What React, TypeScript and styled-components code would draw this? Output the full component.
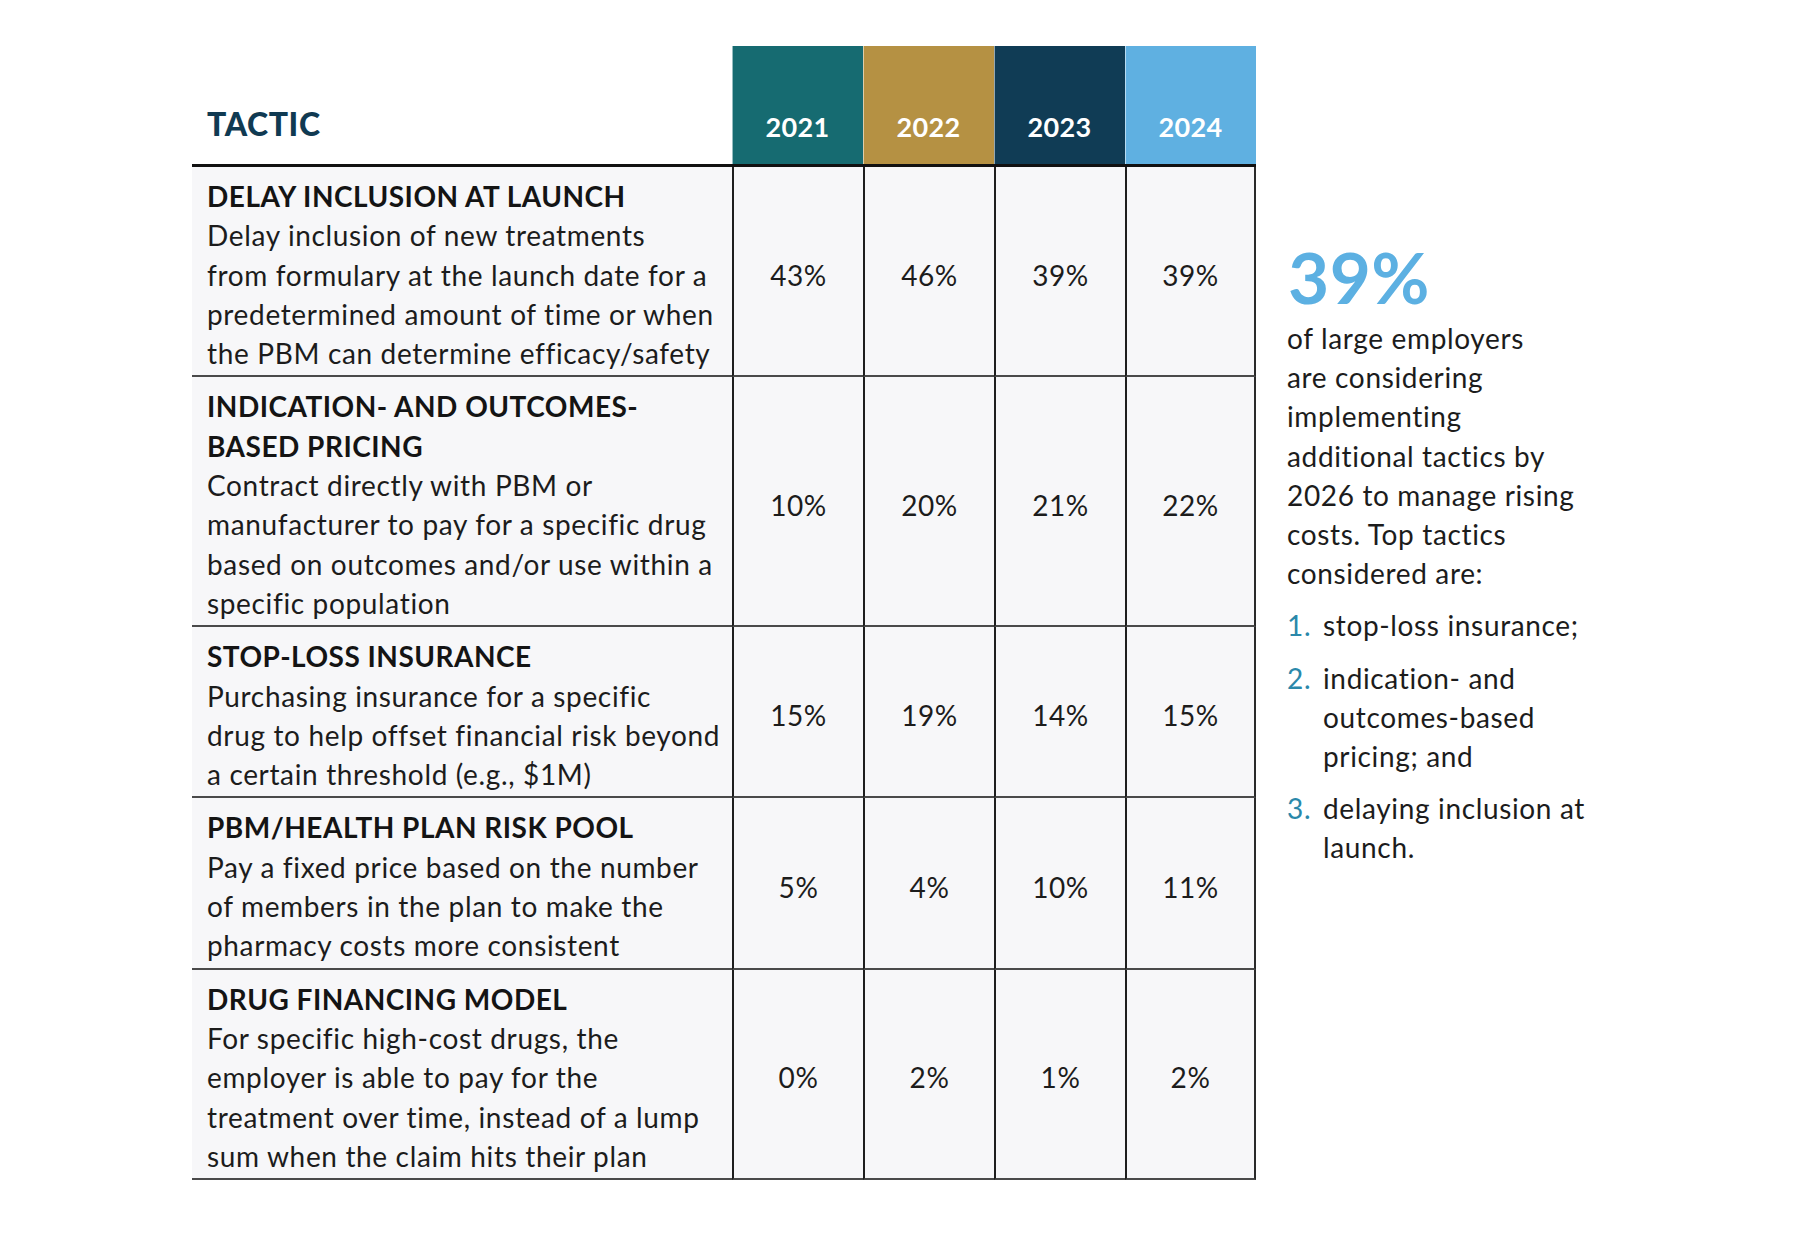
import React from "react";
import styled, { createGlobalStyle } from "styled-components";

const GlobalStyle = createGlobalStyle`
  html, body {
    margin: 0;
    padding: 0;
    background: #ffffff;
  }
  body {
    font-family: Lato, "Open Sans", "Noto Sans", sans-serif;
    color: #1c1c1c;
  }
`;

const Page = styled.div`
  display: flex;
  align-items: flex-start;
  padding: 46px 0 0 192px;
  width: 1800px;
  height: 1242px;
  box-sizing: border-box;
`;

const Table = styled.div`
  display: grid;
  grid-template-columns: 540px repeat(4, 131px);
  flex: none;
`;

const TacticHead = styled.div`
  display: flex;
  align-items: flex-end;
  height: 121px;
  box-sizing: border-box;
  padding: 0 0 25px 15px;
  border-bottom: 3px solid #111111;
  font-size: 32px;
  line-height: 30px;
  font-weight: 900;
  color: #103a52;
  letter-spacing: 0.6px;
`;

const YearHead = styled.div<{ $bg: string }>`
  display: flex;
  align-items: flex-end;
  justify-content: center;
  height: 121px;
  box-sizing: border-box;
  padding-bottom: 23px;
  background: ${(p) => p.$bg};
  border-bottom: 3px solid #111111;
  box-shadow: inset 1px 0 0 rgba(255, 255, 255, 0.55);
  color: #ffffff;
  font-size: 27px;
  line-height: 28px;
  font-weight: 700;
  letter-spacing: 0.3px;
`;

const TacticCell = styled.div`
  background: #f7f7f9;
  padding: 10px 6px 2px 15px;
  border-bottom: 2px solid #4a4a4a;
  font-size: 28px;
  line-height: 39.3px;
  letter-spacing: 0.65px;
  color: #1c1c1c;
`;

const Title = styled.div`
  font-weight: 700;
  color: #141414;
  white-space: nowrap;
  letter-spacing: 0.5px;
`;

const Line = styled.div`
  white-space: nowrap;
`;

const ValueCell = styled.div<{ $last?: boolean }>`
  display: flex;
  align-items: center;
  justify-content: center;
  background: #f7f7f9;
  padding: 10px 0 2px;
  border-left: 2px solid #1e1e1e;
  border-right: ${(p) => (p.$last ? "2px solid #2a2a2a" : "none")};
  border-bottom: 2px solid #4a4a4a;
  font-size: 28px;
  line-height: 39px;
  letter-spacing: 0.6px;
  color: #1c1c1c;
`;

const Aside = styled.div`
  margin-left: 31px;
  padding-top: 197px;
  width: 380px;
  font-size: 28px;
  line-height: 39.2px;
  letter-spacing: 0.65px;
  color: #1c1c1c;
`;

const BigStat = styled.div`
  font-size: 71px;
  line-height: 68px;
  font-weight: 700;
  letter-spacing: 0.5px;
  color: #5cb0e2;
  margin-left: 1px;
  margin-bottom: 8px;
`;

const List = styled.ol`
  list-style: none;
  margin: 13px 0 0;
  padding: 0;
  display: flex;
  flex-direction: column;
  gap: 13px;
`;

const Item = styled.li`
  display: flex;
`;

const Num = styled.span`
  width: 36px;
  flex: none;
  color: #2a88aa;
`;

type Row = { title: string[]; desc: string[]; values: string[] };

const years = [
  { label: "2021", bg: "#166b71" },
  { label: "2022", bg: "#b59143" },
  { label: "2023", bg: "#103c55" },
  { label: "2024", bg: "#5fb0e1" },
];

const rows: Row[] = [
  {
    title: ["DELAY INCLUSION AT LAUNCH"],
    desc: [
      "Delay inclusion of new treatments",
      "from formulary at the launch date for a",
      "predetermined amount of time or when",
      "the PBM can determine efficacy/safety",
    ],
    values: ["43%", "46%", "39%", "39%"],
  },
  {
    title: ["INDICATION- AND OUTCOMES-", "BASED PRICING"],
    desc: [
      "Contract directly with PBM or",
      "manufacturer to pay for a specific drug",
      "based on outcomes and/or use within a",
      "specific population",
    ],
    values: ["10%", "20%", "21%", "22%"],
  },
  {
    title: ["STOP-LOSS INSURANCE"],
    desc: [
      "Purchasing insurance for a specific",
      "drug to help offset financial risk beyond",
      "a certain threshold (e.g., $1M)",
    ],
    values: ["15%", "19%", "14%", "15%"],
  },
  {
    title: ["PBM/HEALTH PLAN RISK POOL"],
    desc: [
      "Pay a fixed price based on the number",
      "of members in the plan to make the",
      "pharmacy costs more consistent",
    ],
    values: ["5%", "4%", "10%", "11%"],
  },
  {
    title: ["DRUG FINANCING MODEL"],
    desc: [
      "For specific high-cost drugs, the",
      "employer is able to pay for the",
      "treatment over time, instead of a lump",
      "sum when the claim hits their plan",
    ],
    values: ["0%", "2%", "1%", "2%"],
  },
];

const intro = [
  "of large employers",
  "are considering",
  "implementing",
  "additional tactics by",
  "2026 to manage rising",
  "costs. Top tactics",
  "considered are:",
];

const topTactics = [
  ["stop-loss insurance;"],
  ["indication- and", "outcomes-based", "pricing; and"],
  ["delaying inclusion at", "launch."],
];

export default function App() {
  return (
    <>
      <GlobalStyle />
      <Page>
        <Table>
          <TacticHead>TACTIC</TacticHead>
          {years.map((y) => (
            <YearHead key={y.label} $bg={y.bg}>
              {y.label}
            </YearHead>
          ))}
          {rows.map((r) => (
            <React.Fragment key={r.title.join(" ")}>
              <TacticCell>
                {r.title.map((t) => (
                  <Title key={t}>{t}</Title>
                ))}
                {r.desc.map((d) => (
                  <Line key={d}>{d}</Line>
                ))}
              </TacticCell>
              {r.values.map((v, i) => (
                <ValueCell key={i} $last={i === r.values.length - 1}>
                  {v}
                </ValueCell>
              ))}
            </React.Fragment>
          ))}
        </Table>
        <Aside>
          <BigStat>39%</BigStat>
          {intro.map((l) => (
            <Line key={l}>{l}</Line>
          ))}
          <List>
            {topTactics.map((lines, i) => (
              <Item key={i}>
                <Num>{i + 1}.</Num>
                <div>
                  {lines.map((l) => (
                    <Line key={l}>{l}</Line>
                  ))}
                </div>
              </Item>
            ))}
          </List>
        </Aside>
      </Page>
    </>
  );
}
